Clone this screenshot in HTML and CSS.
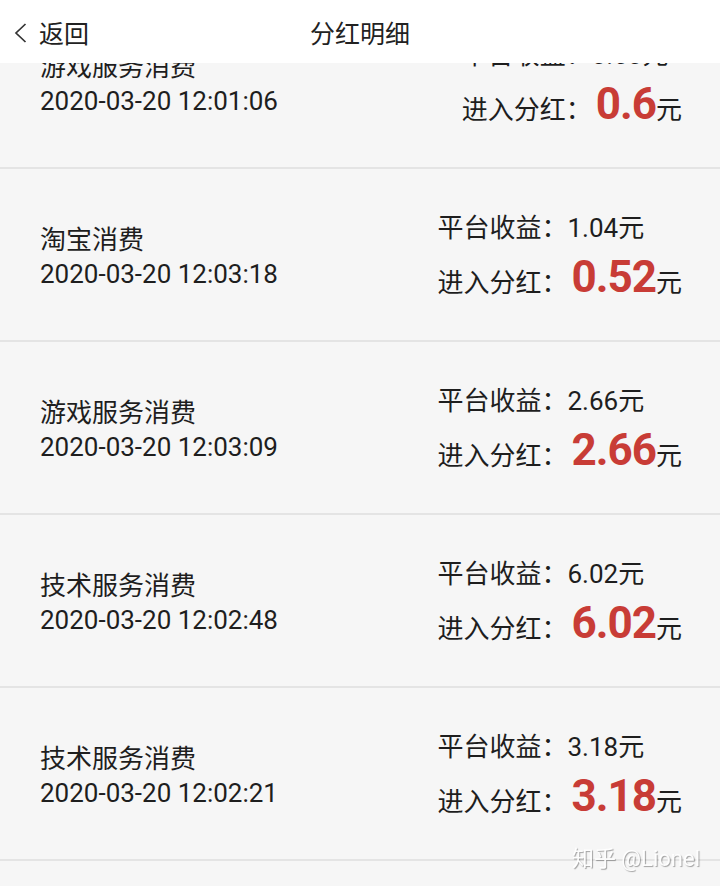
FILE: index.html
```html
<!DOCTYPE html>
<html lang="zh-CN">
<head>
  <meta charset="UTF-8">
  <title>分红明细</title>
  <link rel="stylesheet" href="styles.css">
</head>
<body>
  <header class="topbar">
    <a class="back" href="#">
      <svg class="back-icon" viewBox="0 0 14 22" width="14" height="22">
        <path d="M12.5 2 L3 11 L12.5 20" fill="none" stroke="#333" stroke-width="1.7"/>
      </svg>
      返回
    </a>
    <h1 class="title">分红明细</h1>
    <span></span>
  </header>

  <ul class="list">
    <li class="item">
      <div class="info">
        <p class="name">游戏服务消费</p>
        <p class="time">2020-03-20 12:01:06</p>
      </div>
      <div class="amount">
        <p class="income">平台收益：0.60元</p>
        <p class="share">进入分红：<span class="num">0.6</span>元</p>
      </div>
    </li>
    <li class="item">
      <div class="info">
        <p class="name">淘宝消费</p>
        <p class="time">2020-03-20 12:03:18</p>
      </div>
      <div class="amount">
        <p class="income">平台收益：1.04元</p>
        <p class="share">进入分红：<span class="num">0.52</span>元</p>
      </div>
    </li>
    <li class="item">
      <div class="info">
        <p class="name">游戏服务消费</p>
        <p class="time">2020-03-20 12:03:09</p>
      </div>
      <div class="amount">
        <p class="income">平台收益：2.66元</p>
        <p class="share">进入分红：<span class="num">2.66</span>元</p>
      </div>
    </li>
    <li class="item">
      <div class="info">
        <p class="name">技术服务消费</p>
        <p class="time">2020-03-20 12:02:48</p>
      </div>
      <div class="amount">
        <p class="income">平台收益：6.02元</p>
        <p class="share">进入分红：<span class="num">6.02</span>元</p>
      </div>
    </li>
    <li class="item">
      <div class="info">
        <p class="name">技术服务消费</p>
        <p class="time">2020-03-20 12:02:21</p>
      </div>
      <div class="amount">
        <p class="income">平台收益：3.18元</p>
        <p class="share">进入分红：<span class="num">3.18</span>元</p>
      </div>
    </li>
  </ul>

  <div class="watermark">知乎 @Lionel</div>
</body>
</html>
```

FILE: styles.css
```css
body { margin: 0; background: #f6f6f6; color: #1e1e1e; font-family: Roboto, "Noto Sans CJK SC", sans-serif; overflow: hidden; }
p { margin: 0; }

.topbar { position: fixed; top: 0; left: 0; right: 0; z-index: 2; height: 63px; background: #fff; display: grid; grid-template-columns: 1fr auto 1fr; align-items: center; }
.back { display: flex; align-items: center; gap: 12px; padding-left: 13px; color: #222; text-decoration: none; font-size: 25px; }
.back-icon { display: block; margin-top: 2px; }
.title { margin: 0; font-size: 25px; font-weight: normal; color: #222; }

.list { list-style: none; margin: -4px 0 0; padding: 0; }
.item { height: 167px; display: flex; justify-content: space-between; align-items: center; padding: 4px 38px 0 40px; border-bottom: 2px solid #e4e4e4; }
.name, .time { font-size: 26px; line-height: 34px; }
.income { font-size: 26px; line-height: 46px; }
.share { font-size: 26px; line-height: 52px; }
.num { font-size: 44px; font-weight: bold; color: #c83c36; letter-spacing: -1px; margin-left: 4px; }

.watermark { position: fixed; right: 20px; bottom: 14px; font-size: 22px; color: rgba(255,255,255,0.95); text-shadow: 1px 1px 1px rgba(0,0,0,0.35); }
```
